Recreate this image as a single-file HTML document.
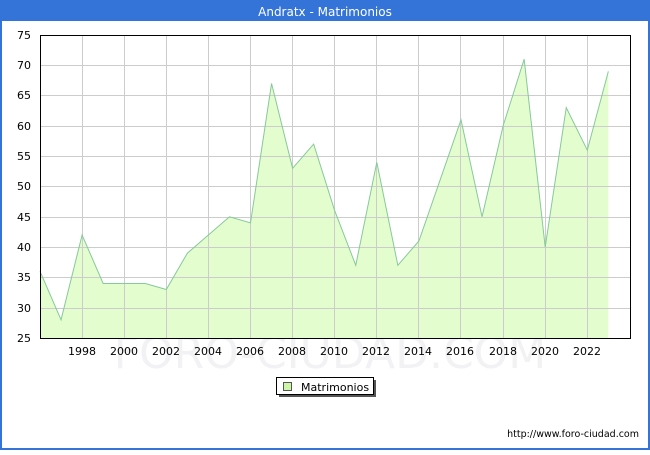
<!DOCTYPE html>
<html><head><style>
html,body{margin:0;padding:0;background:#fff}
</style></head><body>
<svg width="650" height="450" xmlns="http://www.w3.org/2000/svg" font-family="'DejaVu Sans', sans-serif">
<rect x="1" y="1" width="648" height="448" fill="#fff" stroke="#3473d8" stroke-width="2"/>
<rect x="0" y="0" width="650" height="21" fill="#3473d8"/>
<text x="325" y="16" fill="#fff" font-size="12" text-anchor="middle">Andratx - Matrimonios</text>
<rect x="40" y="35" width="590" height="303" fill="#fff"/>
<text x="330" y="368" fill="#f2f2f4" font-size="44" text-anchor="middle">FORO-CIUDAD.COM</text>
<polygon fill="#e4fdce" points="40,338 40,271.3 61.05,319.8 82.1,235 103.15,283.5 124.2,283.5 145.25,283.5 166.3,289.5 187.35,253.2 208.4,235 229.45,216.8 250.5,222.9 271.55,83.5 292.6,168.3 313.65,144.1 334.7,210.7 355.75,265.3 376.8,162.3 397.85,265.3 418.9,241 439.95,180.4 461,119.8 482.05,216.8 503.1,125.9 524.15,59.2 545.2,247.1 566.25,107.7 587.3,150.1 608.35,71.4 608.35,338"/>
<g stroke="#cccccc" stroke-width="1">
<line x1="40" x2="630" y1="65.5" y2="65.5"/><line x1="40" x2="630" y1="95.5" y2="95.5"/><line x1="40" x2="630" y1="126.5" y2="126.5"/><line x1="40" x2="630" y1="156.5" y2="156.5"/><line x1="40" x2="630" y1="186.5" y2="186.5"/><line x1="40" x2="630" y1="217.5" y2="217.5"/><line x1="40" x2="630" y1="247.5" y2="247.5"/><line x1="40" x2="630" y1="277.5" y2="277.5"/><line x1="40" x2="630" y1="308.5" y2="308.5"/>
<line x1="82.5" x2="82.5" y1="35" y2="338"/><line x1="124.5" x2="124.5" y1="35" y2="338"/><line x1="166.5" x2="166.5" y1="35" y2="338"/><line x1="208.5" x2="208.5" y1="35" y2="338"/><line x1="250.5" x2="250.5" y1="35" y2="338"/><line x1="292.5" x2="292.5" y1="35" y2="338"/><line x1="334.5" x2="334.5" y1="35" y2="338"/><line x1="376.5" x2="376.5" y1="35" y2="338"/><line x1="418.5" x2="418.5" y1="35" y2="338"/><line x1="460.5" x2="460.5" y1="35" y2="338"/><line x1="503.5" x2="503.5" y1="35" y2="338"/><line x1="545.5" x2="545.5" y1="35" y2="338"/><line x1="587.5" x2="587.5" y1="35" y2="338"/>
</g>
<polyline fill="none" stroke="#86c99a" stroke-width="1" points="40,271.3 61.05,319.8 82.1,235 103.15,283.5 124.2,283.5 145.25,283.5 166.3,289.5 187.35,253.2 208.4,235 229.45,216.8 250.5,222.9 271.55,83.5 292.6,168.3 313.65,144.1 334.7,210.7 355.75,265.3 376.8,162.3 397.85,265.3 418.9,241 439.95,180.4 461,119.8 482.05,216.8 503.1,125.9 524.15,59.2 545.2,247.1 566.25,107.7 587.3,150.1 608.35,71.4"/>
<rect x="40.5" y="35.5" width="590" height="303" fill="none" stroke="#000" stroke-width="1"/>
<g font-size="11" fill="#000" text-anchor="end">
<text x="31" y="39">75</text><text x="31" y="69">70</text><text x="31" y="99">65</text><text x="31" y="130">60</text><text x="31" y="160">55</text><text x="31" y="190">50</text><text x="31" y="221">45</text><text x="31" y="251">40</text><text x="31" y="281">35</text><text x="31" y="312">30</text><text x="31" y="342">25</text>
</g>
<g font-size="11" fill="#000" text-anchor="middle">
<text x="82" y="355">1998</text><text x="124" y="355">2000</text><text x="166" y="355">2002</text><text x="208" y="355">2004</text><text x="250" y="355">2006</text><text x="292" y="355">2008</text><text x="334" y="355">2010</text><text x="376" y="355">2012</text><text x="418" y="355">2014</text><text x="460" y="355">2016</text><text x="503" y="355">2018</text><text x="545" y="355">2020</text><text x="587" y="355">2022</text>
</g>
<rect x="279" y="380" width="97" height="17" fill="#555"/>
<rect x="276.5" y="377.5" width="97" height="17" fill="#fff" stroke="#000"/>
<rect x="283.5" y="382.5" width="8" height="8" fill="#ccf5a8" stroke="#555"/>
<text x="301" y="391" font-size="11">Matrimonios</text>
<text x="639" y="437" font-size="9.5" text-anchor="end">http://www.foro-ciudad.com</text>
</svg>
</body></html>
